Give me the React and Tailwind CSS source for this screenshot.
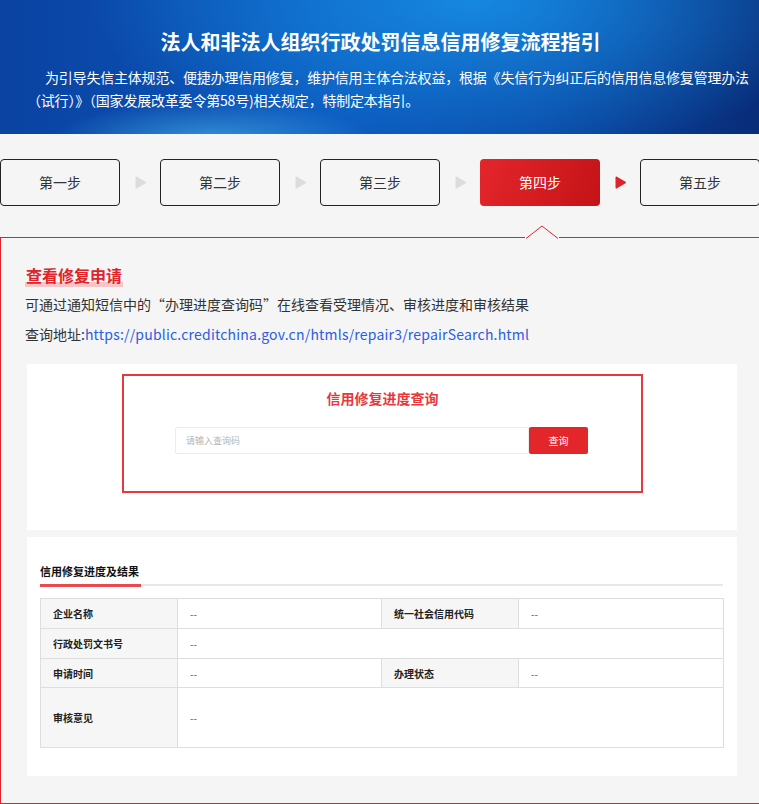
import React from 'react';

const steps = ['第一步', '第二步', '第三步', '第四步', '第五步'];
const active = 3;

function Arrow({ red }) {
  return (
    <div className="w-[40px] flex items-center justify-center">
      <svg width="11" height="13" viewBox="0 0 11 13">
        <path d="M1.5 1.5 L10 6.5 L1.5 11.5 Z" fill={red ? '#e0232a' : '#dcdcdc'} stroke={red ? '#e0232a' : '#dcdcdc'} strokeWidth="2" strokeLinejoin="round" />
      </svg>
    </div>
  );
}

function Label({ children }) {
  return (
    <td className="border border-[#dedede] bg-[#f6f6f6] pl-[12px] text-[10px] font-bold text-[#222]">
      {children}
    </td>
  );
}

function Value({ colSpan }) {
  return (
    <td colSpan={colSpan} className="border border-[#dedede] bg-white pl-[12px] text-[10px] text-[#555]">
      --
    </td>
  );
}

export default function App() {
  return (
    <div className="w-full min-h-screen overflow-hidden bg-[#f5f5f5] font-['Noto_Sans_CJK_SC','Noto_Sans',sans-serif]">
      <div className="w-[761px]">
        {/* header */}
        <div className="h-[134px] pt-[28px] text-white bg-[radial-gradient(ellipse_160px_40px_at_28%_105%,rgba(90,200,250,0.55),transparent),radial-gradient(ellipse_380px_160px_at_62%_0%,#1688e0,transparent),linear-gradient(90deg,#0a43a2_0%,#0b56bb_45%,#0a4aa8_70%,#082c78_100%)]">
          <h1 className="text-center text-[20px] leading-[28px] font-bold">法人和非法人组织行政处罚信息信用修复流程指引</h1>
          <p className="mt-[10px] pl-[27px] pr-[4px] text-[14px] leading-[23px] indent-[18px] tracking-[-0.2px]">
            为引导失信主体规范、便捷办理信用修复，维护信用主体合法权益，根据《失信行为纠正后的信用信息修复管理办法（试行）》（国家发展改革委令第58号)相关规定，特制定本指引。
          </p>
        </div>

        {/* steps */}
        <div className="flex mt-[25px]">
          {steps.map((s, i) => (
            <React.Fragment key={s}>
              {i > 0 && <Arrow red={i === active + 1} />}
              <div
                className={
                  i === active
                    ? 'w-[120px] h-[47px] rounded-[4px] flex items-center justify-center text-[14px] text-white bg-[linear-gradient(110deg,#e4262b,#c41317)]'
                    : 'w-[120px] h-[47px] rounded-[4px] border border-[#222] flex items-center justify-center text-[14px] text-[#333]'
                }
              >
                {s}
              </div>
            </React.Fragment>
          ))}
        </div>

        {/* panel */}
        <div className="relative mt-[31px] border-x border-t border-b-2 border-[#e0232a] pt-[25px] pb-[27px]">
          <svg className="absolute left-[524px] top-[-13px]" width="34" height="15" viewBox="0 0 34 15">
            <rect x="0" y="12" width="34" height="3" fill="#f5f5f5" />
            <path d="M1 13.5 L17 1 L33 13.5" fill="#f5f5f5" stroke="#e0232a" strokeWidth="1" />
          </svg>

          <div className="pl-[24px]">
            <span className="inline-block px-px text-[16px] leading-[24px] font-bold text-[#e0232a] bg-[linear-gradient(transparent_78%,#f5c5c8_78%)]">
              查看修复申请
            </span>
            <p className="mt-[7px] text-[14px] leading-[20px] text-[#333]">可通过通知短信中的“办理进度查询码”在线查看受理情况、审核进度和审核结果</p>
            <p className="mt-[10px] text-[14px] leading-[20px] text-[#333]">
              查询地址:<span className="text-[#2b5ce6] tracking-[0.2px]">https://public.creditchina.gov.cn/htmls/repair3/repairSearch.html</span>
            </p>
          </div>

          {/* query card */}
          <div className="ml-[26px] mt-[20px] w-[710px] h-[166px] bg-white pt-[10px]">
            <div className="ml-[95px] w-[521px] h-[119px] border-2 border-[#e8383d] pt-[12px]">
              <div className="text-center text-[14px] leading-[20px] font-bold text-[#e8383d]">信用修复进度查询</div>
              <div className="mt-[19px] ml-[51px] flex">
                <div className="w-[354px] h-[27px] border border-[#ececec] rounded-l-[2px] flex items-center pl-[10px] text-[9px] text-[#b5b5b5]">请输入查询码</div>
                <div className="w-[59px] h-[27px] rounded-[2px] bg-[#e3262a] flex items-center justify-center text-[10px] text-white">查询</div>
              </div>
            </div>
          </div>

          {/* result card */}
          <div className="ml-[26px] mt-[7px] w-[710px] bg-white pt-[26px] pb-[28px] pl-[13px]">
            <div className="w-[683px] text-[11px] leading-[16px] font-bold text-[#111]">信用修复进度及结果</div>
            <div className="w-[683px] mt-[6px] h-[2px] bg-[#e8e8e8]">
              <div className="w-[101px] h-[3px] -mt-px bg-[#e94a4f]" />
            </div>
            <table className="mt-[12px] w-[683px] border-collapse table-fixed">
              <colgroup>
                <col className="w-[137px]" />
                <col className="w-[204px]" />
                <col className="w-[137px]" />
                <col className="w-[205px]" />
              </colgroup>
              <tbody>
                <tr className="h-[30px]">
                  <Label>企业名称</Label>
                  <Value />
                  <Label>统一社会信用代码</Label>
                  <Value />
                </tr>
                <tr className="h-[30px]">
                  <Label>行政处罚文书号</Label>
                  <Value colSpan={3} />
                </tr>
                <tr className="h-[29px]">
                  <Label>申请时间</Label>
                  <Value />
                  <Label>办理状态</Label>
                  <Value />
                </tr>
                <tr className="h-[60px]">
                  <Label>审核意见</Label>
                  <Value colSpan={3} />
                </tr>
              </tbody>
            </table>
          </div>
        </div>
      </div>
    </div>
  );
}
